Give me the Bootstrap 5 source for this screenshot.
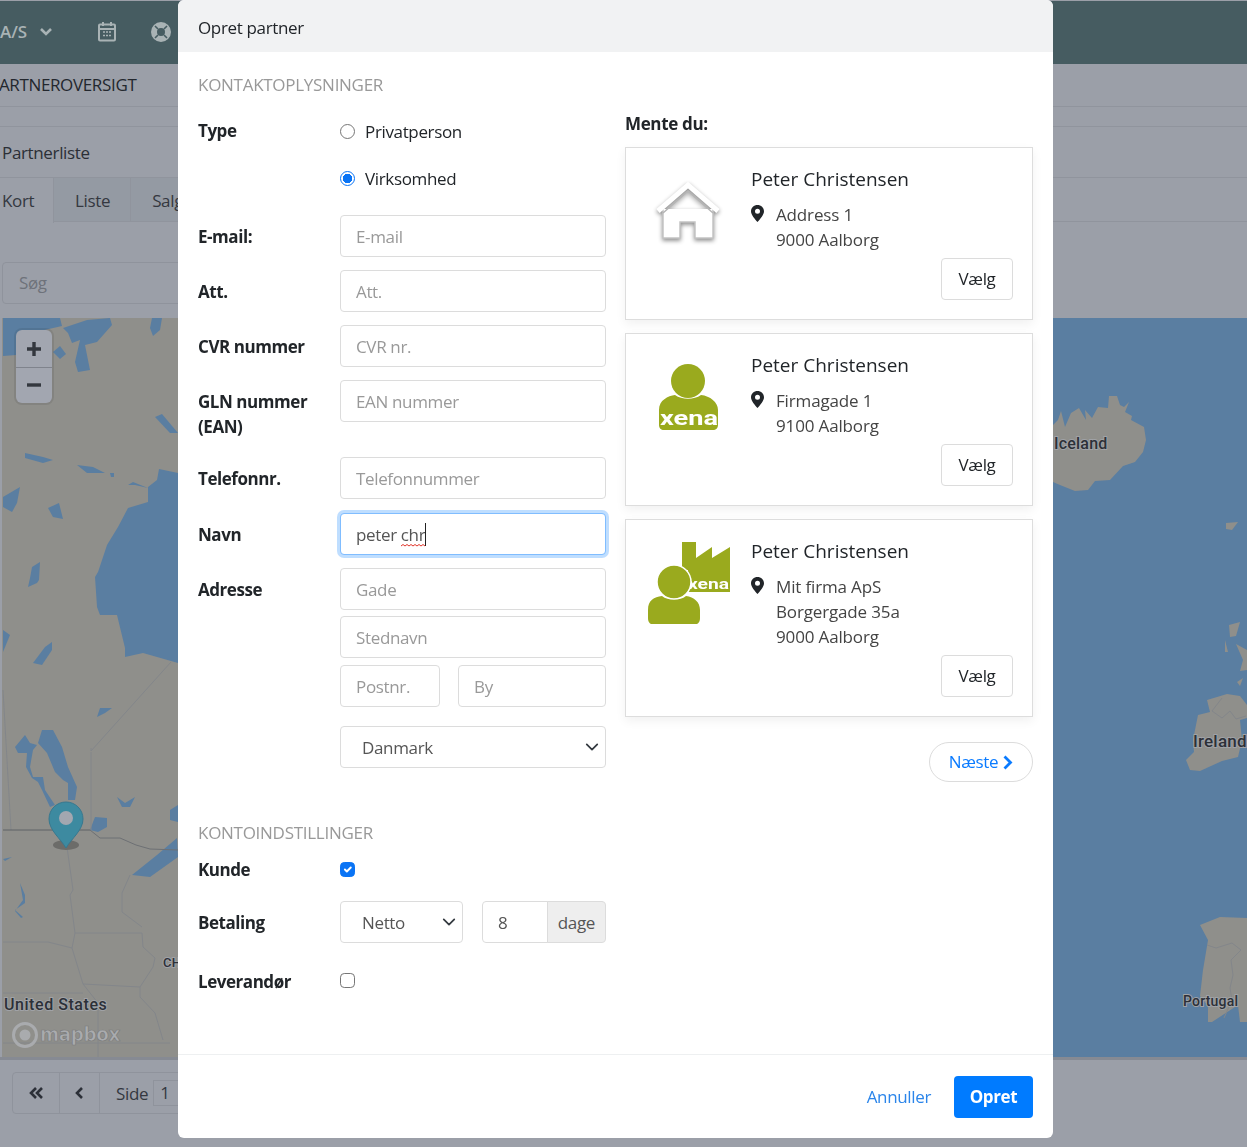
<!DOCTYPE html>
<html lang="da">
<head>
  <meta charset="UTF-8" />
  <title>Opret partner</title>
  <link href="https://cdn.jsdelivr.net/npm/bootstrap@5.3.3/dist/css/bootstrap.min.css" rel="stylesheet">
  <style>
    html, body { height: 100%; overflow: hidden; }
    body { background: #9b9fa8; color: #212529; font-family: "Open Sans", "Noto Sans", sans-serif; font-size: 17px; line-height: 25px; letter-spacing: -.35px; }

    /* dimmed page behind the modal */
    .pg-top { height: 63px; margin-top: 1px; padding-bottom: 2px; background: #465c61; color: #a9b3b5; font-weight: 600; overflow: hidden; }
    .pg-top span { margin-left: 0; letter-spacing: -.1px; }
    .pg-title { height: 43px; border-bottom: 1px solid #90949d; color: #23272e; font-size: 17px; font-weight: 500; line-height: 41px; white-space: nowrap; overflow: hidden; }
    .pg-title span { margin-left: -11px; }
    .pg-head { height: 51px; margin-top: 19px; border-top: 1px solid #90949d; padding-left: 2px; color: #2b2f36; font-weight: 500; line-height: 51px; }
    .pg-tabs { height: 45px; border-top: 1px solid #90949d; border-bottom: 1px solid #90949d; color: #343840; }
    .pg-tab { border-right: 1px solid #90949d; background: #949aa3; padding: 0 20px 0 21px; line-height: 46px; }
    .pg-tab.on { width: 54px; background: #9b9fa8; height: 45px; padding-left: 2px; }
    .pg-search { width: 200px; height: 42px; margin: 40px 0 14px 2px; border: 1px solid #8f939c; border-radius: 4px; padding-left: 16px; color: #6e727a; line-height: 40px; }
    .pg-map { display: block; margin-left: 2px; }
    .pg-strip { height: 3px; background: #868a93; }
    .pg-pager { height: 42px; width: 200px; margin: 12px 0 0 12px; border: 1px solid #8f939c; border-radius: 4px; color: #343840; }
    .pg-pager > div { border-right: 1px solid #8f939c; display: flex; align-items: center; justify-content: center; }
    .pg-pick { width: 40px; height: 26px; margin-left: 5px; padding-left: 6px; border: 1px solid #8f939c; line-height: 24px; }
    .pg-zoom { position: absolute; left: 16px; top: 330px; width: 36px; height: 73px; background: #a2a6b0; border-radius: 6px; box-shadow: 0 0 0 2px rgba(0,0,0,.08); }
    .pg-zoom hr { margin: 0; border-color: #7f838c; opacity: 1; position: absolute; left: 0; right: 0; top: 37px; }

    /* modal */
    .modal.pm-wrap { display: block; overflow: hidden; }
    .pm-dialog { max-width: 875px; width: 875px; margin: 0 0 0 178px; }
    .pm-dialog .modal-content { height: 1138px; border: 0; border-radius: 6px; }
    .pm-dialog .modal-header { height: 52px; padding: 2px 20px 0; border: 0; background: #f1f2f3; font-size: 17px; }
    .pm-dialog .modal-body { height: 1002px; flex: none; padding: 21px 20px 0; }
    .pm-dialog .modal-footer { height: 84px; padding: 0 20px 0 0; border-top: 1px solid #eef0f1; gap: 23px; }
    .pm-dialog .modal-footer > * { margin: 0; }
    .sec-hd { color: #999; font-size: 17px; line-height: 24px; letter-spacing: -.28px; }
    .fld-row { display: flex; margin-bottom: 13px; }
    .fld-lbl { flex: 0 0 142px; padding: 9px 0 5px; font-weight: 700; letter-spacing: -.45px; }
    .fld-box { flex: 1 1 auto; min-width: 0; position: relative; font-weight: 400; }
    .fld-box .form-control, .fld-box .form-select, .fld-box .input-group-text { height: 42px; font-size: 17px; line-height: 25px; letter-spacing: -.35px; border-color: #dcdcdc; border-radius: 4px; color: #555; }
    .fld-box .form-control { padding: 0 15px; }
    .fld-box .form-select { padding: 0 30px 0 21px; background-position: right 6px center; background-size: 14px 14px; }
    .fld-box .form-control::placeholder { color: #999; }
    .fld-box .form-control.is-on { border-color: #80bdff; box-shadow: 0 0 0 3px rgba(0,123,255,.25); }
    .fld-box .input-group-text { background: #eee; padding: 0 10px; }
    .fld-box .input-group .form-control { border-radius: 4px 0 0 4px; }
    .fld-box .input-group-text { border-radius: 0 4px 4px 0; }
    .fld-caret { position: absolute; left: 85px; top: 10px; width: 1px; height: 23px; background: #222; }
    .fld-wave { position: absolute; left: 61px; top: 31px; }
    .form-check-input { width: 15px; height: 15px; margin-top: 0; border-color: #767676; }
    .fld-chk { height: 47px; display: flex; align-items: center; gap: 10px; margin: 0; }
    .fld-chk .form-check-input:checked { background-color: #fff; border-color: #0a74f5; background-image: radial-gradient(circle, #0a74f5 0 4.5px, transparent 5px); }
    .tick-box:checked { background-color: #0a74f5; border-color: #0a74f5; }

    .hit-col { flex: 0 0 408px; margin-left: 19px; }
    .hit-hd { font-weight: 700; margin: 39px 0 11px; line-height: 24px; letter-spacing: -.35px; }
    .card.hit-item { border-color: #ddd; border-radius: 0; box-shadow: 0 4px 10px rgba(0,0,0,.06); margin-bottom: 13px; flex-direction: row; }
    .hit-logo { flex: 0 0 125px; display: block; }
    .hit-main { flex: 1 1 auto; padding: 18px 19px 19px 0; }
    .hit-name { font-size: 19px; font-weight: 500; line-height: 26px; margin-bottom: 10px; letter-spacing: 0; }
    .hit-addr { display: flex; gap: 12px; color: #444; margin-bottom: 6px; letter-spacing: -.15px; }
    .hit-addr svg { flex: none; margin-top: 3px; }
    .btn.hit-btn { display: block; width: 72px; height: 42px; margin-left: auto; padding: 0; background: #fff; border: 1px solid #dcdcdc; border-radius: 4px; font-size: 17px; letter-spacing: -.35px; color: #212529; font-weight: 500; }
    .btn.hit-next { height: 40px; width: 104px; padding: 0; border: 1px solid #dcdcdc; border-radius: 20px; color: #0a7bff; background: #fff; font-size: 17px; letter-spacing: -.35px; }
    .btn.pm-cancel { color: #2b85ea; font-size: 17px; letter-spacing: -.35px; padding: 0; border: 0; }
    .btn.pm-save { width: 79px; height: 42px; padding: 0; background: #007bff; border: 0; border-radius: 4px; color: #fff; font-size: 17px; letter-spacing: -.35px; font-weight: 700; }
    .map-lbl { font-family: "Roboto", "DejaVu Sans", sans-serif; font-size: 16px; font-weight: 500; letter-spacing: .2px; fill: #2c3038; stroke: #a0a2a6; stroke-width: 2px; paint-order: stroke; }
    .hse-shadow { filter: drop-shadow(0 2px 2px rgba(0,0,0,.45)); }
    .xena-txt { font-family: "Roboto", sans-serif; font-weight: 700; letter-spacing: 0; fill: #fff; }
  </style>
</head>
<body>

  <!-- page behind -->
  <div class="pg-top d-flex align-items-center">
    <span>A/S</span>
    <svg style="margin-left:12px" width="14" height="10" viewBox="0 0 14 10"><path d="M2 2l5 5 5-5" fill="none" stroke="#a9b3b5" stroke-width="2.6"/></svg>
    <svg style="margin-left:44px" width="20" height="21" viewBox="0 0 20 21" fill="none" stroke="#a9b3b5" stroke-width="2"><rect x="2" y="3.500" width="16" height="16" rx="1"/><path d="M2 8h16M6 1v4M14 1v4"/><path d="M6 11h2M9 11h2M12 11h2M6 14.500h2M9 14.500h2M12 14.500h2" stroke-width="1.600"/></svg>
    <svg style="margin-left:34px" width="20" height="20" viewBox="0 0 20 20"><circle cx="10" cy="10" r="7" fill="none" stroke="#a9b3b5" stroke-width="6"/><path d="M4 4l3 3M16 4l-3 3M4 16l3-3M16 16l-3-3" stroke="#465c61" stroke-width="1.600"/></svg>
  </div>
  <div class="pg-title"><span>PARTNEROVERSIGT</span></div>
  <div class="pg-head">Partnerliste</div>
  <div class="pg-tabs d-flex">
    <div class="pg-tab on">Kort</div>
    <div class="pg-tab">Liste</div>
    <div class="pg-tab">Salg</div>
  </div>
  <div class="pg-search">Søg</div>

  <svg class="pg-map" width="1245" height="739" viewBox="2 318 1245 739">
    <rect x="2" y="318" width="1245" height="739" fill="#8f8f8b"/>
    <!-- ocean east of the modal -->
    <rect x="178" y="318" width="1069" height="739" fill="#5a7ea1"/>
    <g fill="#5a7ea1">
      <!-- Hudson Bay -->
      <path d="M178 473L159 469 157 480 148 487 148 502 128 508 118 527 107 545 98 572 95 577 97 607 100 615 117 615 125 648 125 657 143 653 157 657 178 663Z"/>
      <path d="M3 318H60L62 326 40 331 20 333 16 355 3 356Z"/>
      <path d="M63 328L87 320 110 318 112 325 97 342 85 345 90 370 78 372 75 362 80 340 72 343 68 333Z"/>
      <path d="M53 352L60 346 66 354 60 359Z"/>
      <path d="M152 318H162L160 330 153 336 150 328Z"/>
      <path d="M155 417L162 414 178 433H170Z"/>
      <path d="M25 453L43 457 53 460 43 463 25 458Z"/>
      <path d="M77 465L93 467 105 473 87 473Z"/>
      <path d="M110 473L114 473 114 477 111 477Z"/>
      <path d="M128 485L133 482 148 488 135 485Z"/>
      <path d="M3 497L20 487 17 503 12 512 3 507Z"/>
      <path d="M48 508L59 503 63 519 53 517Z"/>
      <path d="M32 567L40 562 39 580 37 583 28 587 30 578Z"/>
      <path d="M3 630L10 635 3 652Z"/>
      <path d="M33 663L45 647 52 642 52 650 42 665Z"/>
      <path d="M97 717L100 708 112 708 105 713Z"/>
      <path d="M38 743L42 730 53 730 62 747 68 767 77 787 75 800 68 800 68 783 63 780 55 772 47 753Z"/>
      <path d="M15 747L25 735 30 743 37 745 33 750 30 767 33 777 43 777 45 790 55 805 50 807 42 790 38 782 32 778 26 767 27 753 18 753Z"/>
      <path d="M117 797L125 803 135 797 130 807 122 807Z"/>
      <path d="M90 830L95 817 107 818 107 827 98 832Z"/>
      <path d="M170 810L178 805V822L170 820Z"/>
      <path d="M132 875L157 855 177 838 178 857 150 877Z"/>
      <path d="M3 859L12 857 5 861Z"/>
      <path d="M20 883L25 895 25 903 15 910 23 917 21 918 15 911 23 900Z"/>
    </g>
    <!-- borders -->
    <g fill="none" stroke="#83868a" stroke-width="1">
      <path d="M91 748V751L171 662M91 752V830"/>
      <path d="M3 690L11 830"/>
      <path d="M3 830H90" stroke="#5e6266"/>
      <path d="M90 830L100 838 120 838 136 845 150 849 178 850" stroke="#6d7074"/>
      <path d="M67 847L73 890 70 895 75 933 72 948 48 942 3 942"/>
      <path d="M75 933H142L143 947 155 958 153 967 140 987 83 984 72 948"/>
      <path d="M130 875L122 893 122 912 142 927"/>
      <path d="M140 987L140 997 155 1013 163 1040"/>
      <path d="M83 984L98 1003V1057M3 993H83"/>
      <path d="M3 1043H170"/>
    </g>
    <!-- Iceland -->
    <path fill="#8f8f8b" d="M1053 425L1058 420 1061 411 1065 427 1071 413 1079 408 1086 420 1085 410 1092 418 1098 407 1108 408 1109 396 1117 396 1120 405 1124 407 1129 402 1125 412 1132 416 1131 420 1144 427 1146 440 1143 452 1135 462 1123 466 1110 480 1095 481 1088 490 1075 491 1060 485 1053 482Z"/>
    <path fill="#8f8f8b" d="M1226 523L1238 522 1232 530 1226 529Z"/>
    <!-- Scotland and Ireland -->
    <path fill="#8f8f8b" d="M1229 625L1240 622 1236 636 1230 637ZM1225 640L1228 652 1225 652ZM1236 644L1247 650V670L1240 671 1243 660ZM1237 682L1243 678 1240 686Z"/>
    <path fill="#8f8f8b" d="M1207 700L1227 694 1240 696 1247 705V718L1240 720 1242 740 1238 757 1222 761 1200 771 1190 770 1186 760 1194 752 1193 740 1198 715 1210 712Z"/>
    <path fill="none" stroke="#83868a" d="M1222 698L1212 711 1222 718 1230 711 1236 719 1246 716"/>
    <!-- Iberia -->
    <path fill="#8f8f8b" d="M1200 925L1220 917 1247 918V1022L1240 1022 1238 1005 1212 1022 1208 1022 1208 1006 1200 996 1203 970 1208 940Z"/>
    <path fill="none" stroke="#83868a" d="M1207 945L1216 948 1232 943 1241 950 1231 960 1233 975 1230 988 1232 1000 1224 1018"/>
    <!-- marker -->
    <ellipse cx="66" cy="845" rx="13" ry="5" fill="#6c6c69"/>
    <path fill="#3d8aa0" stroke="#37788f" d="M66 848C60 838 49 830 49 819 49 809 57 802 66 802 75 802 83 809 83 819 83 830 72 838 66 848Z"/>
    <circle cx="66" cy="818" r="7" fill="#a3a7b0"/>
    <text class="map-lbl" x="1054" y="449">Iceland</text>
    <text class="map-lbl" x="1193" y="747" style="font-size:17px">Ireland</text>
    <text class="map-lbl" x="4" y="1010" textLength="103">United States</text>
    <text class="map-lbl" x="1183" y="1006" style="font-size:14px">Portugal</text>
    <text class="map-lbl" x="163" y="967" style="font-size:13px">CH</text>
    <circle cx="25" cy="1035" r="11.500" fill="none" stroke="#a9abae" stroke-width="3"/>
    <circle cx="25" cy="1035" r="5.500" fill="#a9abae"/>
    <text x="40" y="1041" font-family="'DejaVu Sans', sans-serif" font-size="19" font-weight="700" textLength="80" lengthAdjust="spacingAndGlyphs" fill="#a9abae" stroke="#7b7c7c" stroke-width=".7">mapbox</text>
  </svg>
  <div class="pg-strip"></div>

  <div class="pg-pager d-flex">
    <div style="width:47px"><svg width="16" height="12" viewBox="0 0 16 12" fill="none" stroke="#2c3038" stroke-width="2.600"><path d="M8 1L3 6l5 5M14 1L9 6l5 5"/></svg></div>
    <div style="width:40px"><svg width="10" height="12" viewBox="0 0 10 12" fill="none" stroke="#2c3038" stroke-width="2.600"><path d="M7 1L2 6l5 5"/></svg></div>
    <div class="border-0 ps-3 flex-grow-1 justify-content-start">Side<span class="pg-pick">1</span></div>
  </div>

  <div class="pg-zoom">
    <svg class="d-block mx-auto" style="margin-top:12px" width="14" height="14" viewBox="0 0 14 14"><path d="M7 0v14M0 7h14" stroke="#33373e" stroke-width="3.400"/></svg>
    <hr>
    <svg class="d-block mx-auto" style="margin-top:27px" width="14" height="4" viewBox="0 0 14 4"><path d="M0 2h14" stroke="#33373e" stroke-width="3.400"/></svg>
  </div>

  <!-- Opret partner dialog -->
  <div class="modal pm-wrap">
    <div class="modal-dialog pm-dialog">
      <div class="modal-content">
        <div class="modal-header">Opret partner</div>
        <div class="modal-body d-flex">

          <form class="flex-grow-1" style="min-width:0">
            <div class="sec-hd">KONTAKTOPLYSNINGER</div>
            <div class="fld-row mb-0" style="margin-top:11px">
              <div class="fld-lbl" style="padding-top:10px">Type</div>
              <div class="fld-box">
                <label class="fld-chk"><input class="form-check-input" type="radio" name="ptype"> Privatperson</label>
                <label class="fld-chk"><input class="form-check-input" type="radio" name="ptype" checked> Virksomhed</label>
              </div>
            </div>
            <div class="fld-row" style="margin-top:13px">
              <div class="fld-lbl">E-mail:</div>
              <div class="fld-box"><input class="form-control" placeholder="E-mail"></div>
            </div>
            <div class="fld-row">
              <div class="fld-lbl">Att.</div>
              <div class="fld-box"><input class="form-control" placeholder="Att."></div>
            </div>
            <div class="fld-row">
              <div class="fld-lbl">CVR nummer</div>
              <div class="fld-box"><input class="form-control" placeholder="CVR nr."></div>
            </div>
            <div class="fld-row">
              <div class="fld-lbl">GLN nummer (EAN)</div>
              <div class="fld-box"><input class="form-control" placeholder="EAN nummer"></div>
            </div>
            <div class="fld-row" style="margin-bottom:14px">
              <div class="fld-lbl">Telefonnr.</div>
              <div class="fld-box"><input class="form-control" placeholder="Telefonnummer"></div>
            </div>
            <div class="fld-row">
              <div class="fld-lbl">Navn</div>
              <div class="fld-box">
                <input class="form-control is-on" value="peter chr">
                <svg class="fld-wave" width="26" height="3" viewBox="0 0 26 3"><path d="M0 2l2-1.500 2 1.500 2-1.500 2 1.500 2-1.500 2 1.500 2-1.500 2 1.500 2-1.500 2 1.500 2-1.500 2 1.500" fill="none" stroke="#e0352b"/></svg>
                <div class="fld-caret"></div>
              </div>
            </div>
            <div class="fld-row mb-0">
              <div class="fld-lbl">Adresse</div>
              <div class="fld-box d-flex flex-column">
                <input class="form-control" placeholder="Gade" style="margin-bottom:6px">
                <input class="form-control" placeholder="Stednavn" style="margin-bottom:7px">
                <div class="d-flex" style="gap:18px">
                  <input class="form-control" placeholder="Postnr." style="flex:0 0 100px">
                  <input class="form-control" placeholder="By">
                </div>
                <select class="form-select" style="margin-top:19px"><option>Danmark</option></select>
              </div>
            </div>

            <div class="sec-hd" style="margin-top:53px">KONTOINDSTILLINGER</div>
            <div class="fld-row mb-0" style="height:39px;margin-top:7px">
              <div class="fld-lbl" style="padding-top:5px">Kunde</div>
              <div class="fld-box"><input class="form-check-input tick-box d-block" style="margin-top:10px" type="checkbox" checked></div>
            </div>
            <div class="fld-row" style="margin-top:10px;margin-bottom:0">
              <div class="fld-lbl">Betaling</div>
              <div class="fld-box d-flex" style="gap:19px">
                <select class="form-select" style="flex:0 0 123px"><option>Netto</option></select>
                <div class="input-group">
                  <input class="form-control" value="8">
                  <span class="input-group-text">dage</span>
                </div>
              </div>
            </div>
            <div class="fld-row mb-0" style="margin-top:18px">
              <div class="fld-lbl pt-2">Leverandør</div>
              <div class="fld-box"><input class="form-check-input d-block" style="margin-top:12px" type="checkbox"></div>
            </div>
          </form>

          <div class="hit-col">
            <div class="hit-hd">Mente du:</div>

            <div class="card hit-item">
              <svg class="hit-logo" width="125" height="110" viewBox="0 0 125 110">
                <g class="hse-shadow">
                  <path d="M37 61V90H54V74H69V90H87V61" fill="#fff" stroke="#c4c4c4" stroke-width="1.500"/>
                  <path d="M32 63L62 37 92 63" fill="none" stroke="#fff" stroke-width="5"/>
                  <path d="M37 65L62 43 87 65" fill="none" stroke="#b5b5b5" stroke-width="1.500"/>
                </g>
              </svg>
              <div class="hit-main">
                <div class="hit-name">Peter Christensen</div>
                <div class="hit-addr">
                  <svg width="13" height="17" viewBox="0 0 13 17"><path fill-rule="evenodd" fill="#212529" d="M6.500 0C3 0 0 2.700 0 6.200 0 10 4 14 6.500 17 9 14 13 10 13 6.200 13 2.700 10 0 6.500 0ZM6.500 3.800A2.500 2.500 0 1 1 6.500 8.800 2.500 2.500 0 0 1 6.500 3.800Z"/></svg>
                  <div>Address 1<br>9000 Aalborg</div>
                </div>
                <button type="button" class="btn hit-btn">Vælg</button>
              </div>
            </div>

            <div class="card hit-item">
              <svg class="hit-logo" width="125" height="110" viewBox="0 0 125 110">
                <circle cx="62" cy="47" r="17" fill="#9aaa1e"/>
                <path d="M38 96C35 96 33 94 33 91V76C33 66 42 62 49 61 56 66 68 66 75 61 84 62 92 68 92 76V91C92 94 90 96 87 96Z" fill="#9aaa1e"/>
                <text class="xena-txt" x="34" y="91" font-size="20" textLength="58" lengthAdjust="spacingAndGlyphs">xena</text>
              </svg>
              <div class="hit-main">
                <div class="hit-name">Peter Christensen</div>
                <div class="hit-addr">
                  <svg width="13" height="17" viewBox="0 0 13 17"><path fill-rule="evenodd" fill="#212529" d="M6.500 0C3 0 0 2.700 0 6.200 0 10 4 14 6.500 17 9 14 13 10 13 6.200 13 2.700 10 0 6.500 0ZM6.500 3.800A2.500 2.500 0 1 1 6.500 8.800 2.500 2.500 0 0 1 6.500 3.800Z"/></svg>
                  <div>Firmagade 1<br>9100 Aalborg</div>
                </div>
                <button type="button" class="btn hit-btn">Vælg</button>
              </div>
            </div>

            <div class="card hit-item">
              <svg class="hit-logo" width="125" height="110" viewBox="0 0 125 110">
                <path d="M56 22H70V38L86 27V38L104 27V72H62V50H56Z" fill="#9aaa1e"/>
                <text class="xena-txt" x="62" y="69" font-size="14" textLength="41" lengthAdjust="spacingAndGlyphs">xena</text>
                <circle cx="48" cy="62" r="17" fill="#9aaa1e" stroke="#fff" stroke-width="1.500"/>
                <path d="M22 98V90C22 80 28 77 36 76 42 81 54 81 60 76 68 77 74 82 74 90V98C74 102 72 104 70 104H26C24 104 22 102 22 98Z" fill="#9aaa1e"/>
              </svg>
              <div class="hit-main">
                <div class="hit-name">Peter Christensen</div>
                <div class="hit-addr">
                  <svg width="13" height="17" viewBox="0 0 13 17"><path fill-rule="evenodd" fill="#212529" d="M6.500 0C3 0 0 2.700 0 6.200 0 10 4 14 6.500 17 9 14 13 10 13 6.200 13 2.700 10 0 6.500 0ZM6.500 3.800A2.500 2.500 0 1 1 6.500 8.800 2.500 2.500 0 0 1 6.500 3.800Z"/></svg>
                  <div>Mit firma ApS<br>Borgergade 35a<br>9000 Aalborg</div>
                </div>
                <button type="button" class="btn hit-btn">Vælg</button>
              </div>
            </div>

            <div class="d-flex justify-content-end" style="margin-top:25px">
              <button type="button" class="btn hit-next d-flex align-items-center justify-content-center gap-1">Næste
                <svg width="11" height="15" viewBox="0 0 11 15"><path d="M2.500 1.500l6 6-6 6" fill="none" stroke="#0a7bff" stroke-width="2.800"/></svg>
              </button>
            </div>
          </div>
        </div>
        <div class="modal-footer">
          <button type="button" class="btn pm-cancel">Annuller</button>
          <button type="button" class="btn pm-save">Opret</button>
        </div>
      </div>
    </div>
  </div>

  <script src="https://cdn.jsdelivr.net/npm/bootstrap@5.3.3/dist/js/bootstrap.bundle.min.js"></script>
</body>
</html>
